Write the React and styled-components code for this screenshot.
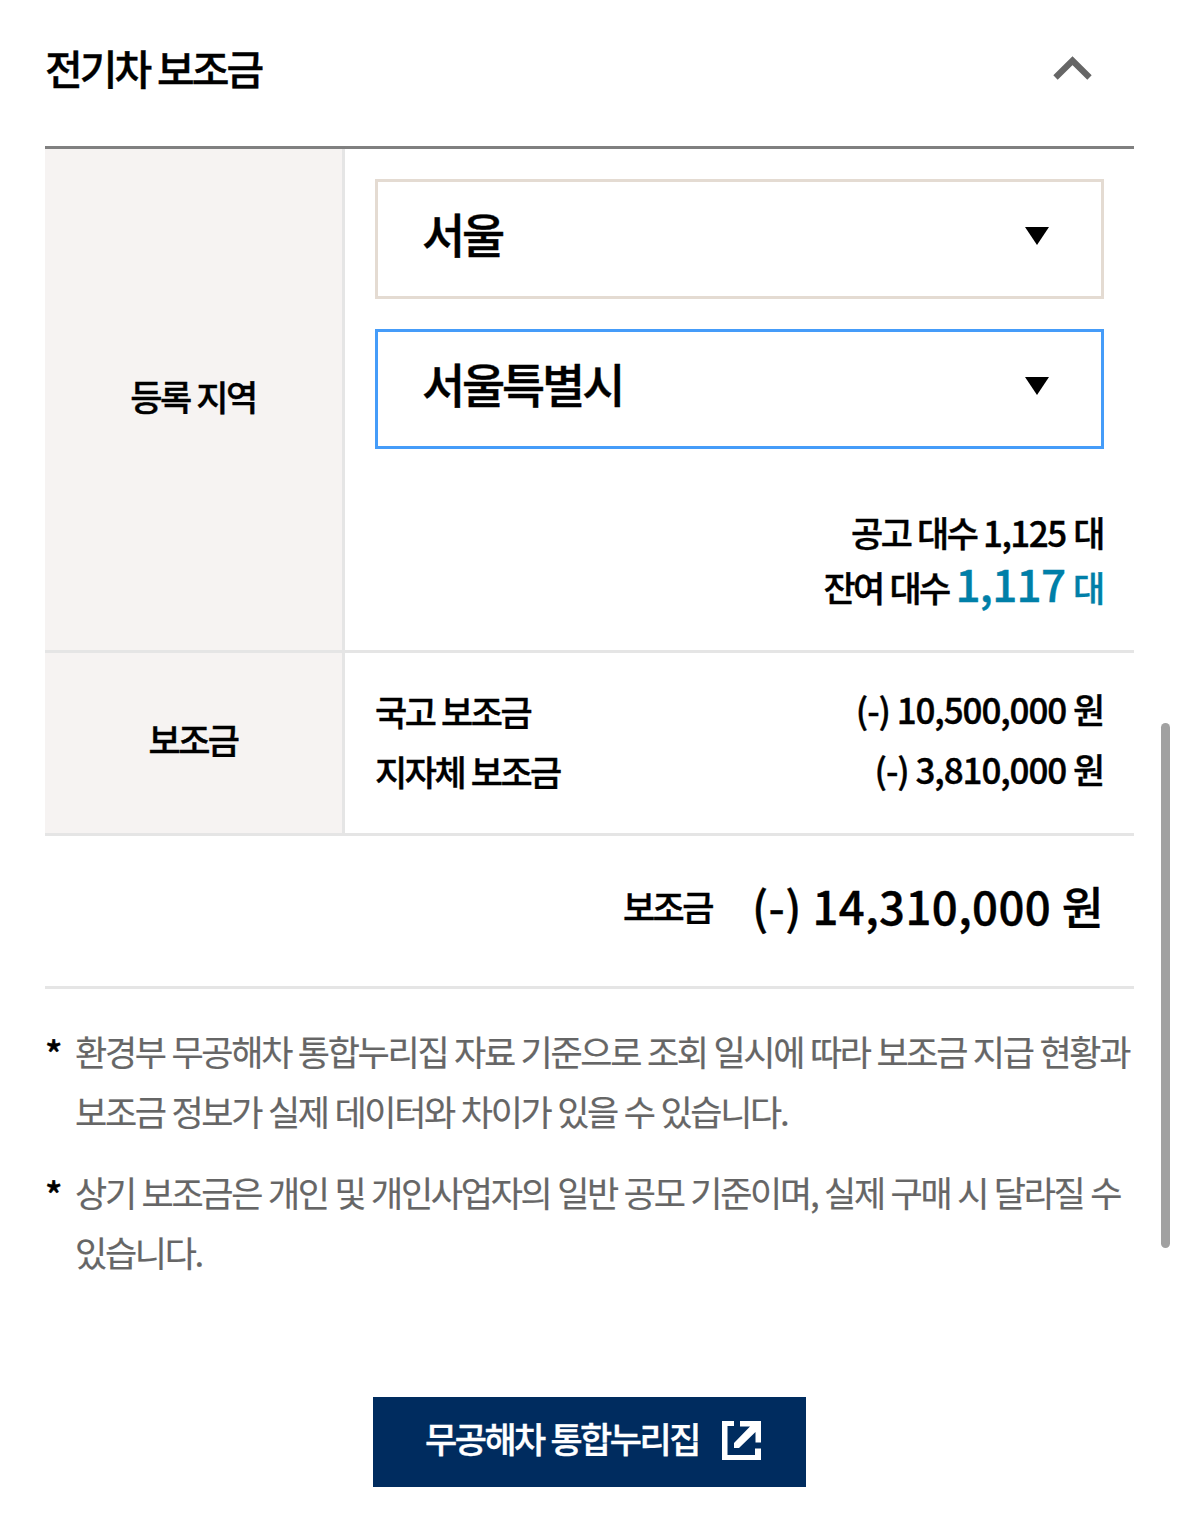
import React from "react";
import styled, { createGlobalStyle } from "styled-components";

const GlobalStyle = createGlobalStyle`
  * { box-sizing: border-box; }
  body {
    margin: 0;
    background: #fff;
    color: #000;
    font-family: "Noto Sans CJK KR", "Noto Sans", sans-serif;
    font-weight: 500;
  }
`;

const Page = styled.main`
  position: relative;
  width: 1179px;
  height: 1534px;
  padding: 0 45px;
  overflow: hidden;
`;

const Text = styled.span`
  display: block;
  white-space: pre;
  font-size: ${(p) => p.$size || 35}px;
  letter-spacing: ${(p) => p.$track ?? -2.5}px;
  word-spacing: ${(p) => p.$word ?? 1.2}px;
  line-height: ${(p) => p.$line || 60}px;
  color: ${(p) => p.$color || "inherit"};
  font-weight: ${(p) => p.$weight || 500};
  -webkit-text-stroke: ${(p) => p.$stroke ?? 0.4}px currentColor;
`;

const Title = styled(Text).attrs({ as: "h1" })`
  margin: 0;
`;

const Header = styled.header`
  display: flex;
  justify-content: space-between;
  height: 146px;
  padding: 37px 42px 0 0;
`;

const Chevron = styled.svg`
  width: 39px;
  height: 25px;
  margin-top: 19px;
`;

const Table = styled.section`
  border-top: 3px solid #808080;
`;

const Row = styled.div`
  display: grid;
  grid-template-columns: 300px 1fr;
  height: ${(p) => p.$height}px;
  border-bottom: 3px solid #e5e5e5;
`;

const Label = styled.div`
  display: flex;
  align-items: center;
  justify-content: center;
  padding: 0 1px 8px 0;
  background: #f6f3f2;
  border-right: 3px solid #e5e5e5;
`;

const Cell = styled.div`
  display: flex;
  flex-direction: column;
  padding: ${(p) => p.$top}px 30px 0;
`;

const Select = styled.div`
  display: flex;
  justify-content: space-between;
  height: 120px;
  margin-bottom: 30px;
  padding: 19px 52px 0 44px;
  border: 3px solid ${(p) => (p.$active ? "#459cf9" : "#e4dbd2")};
`;

const Arrow = styled.svg`
  width: 24px;
  height: 18px;
  margin-top: 26px;
`;

const Counts = styled.div`
  display: flex;
  flex-direction: column;
  padding-top: 28px;
`;

const Count = styled.div`
  display: flex;
  justify-content: flex-end;
  align-items: baseline;
  height: ${(p) => p.$height || 54}px;
`;

const Item = styled.div`
  display: flex;
  justify-content: space-between;
  height: 60px;
`;

const Amount = styled(Text)`
  margin-top: -2px;
`;

const Total = styled.div`
  display: flex;
  justify-content: flex-end;
  gap: 40px;
  height: 153px;
  padding: 37px 30px 0 0;
  border-bottom: 3px solid #e5e5e5;
`;

const Notes = styled.ul`
  list-style: none;
  margin: 32px 0 0;
  padding: 0;
`;

const Note = styled.li`
  display: flex;
  margin-bottom: 21px;
`;

const Star = styled(Text)`
  width: 30px;
  padding-top: 1px;
`;

const LinkButton = styled.a`
  display: flex;
  width: 433px;
  height: 90px;
  margin: 115px auto 0;
  padding: 11px 45px 0 52px;
  justify-content: space-between;
  background: #002c5f;
`;

const LinkIcon = styled.svg`
  width: 39px;
  height: 39px;
  margin-top: 13px;
`;

const ScrollThumb = styled.div`
  position: absolute;
  top: 723px;
  right: 9px;
  width: 9px;
  height: 525px;
  border-radius: 4.5px;
  background: #a1a1a1;
`;

const RegionSelect = ({ value, active }) => (
  <Select $active={active}>
    <Text $size={47} $track={-3.2} $line={64}>{value}</Text>
    <Arrow viewBox="0 0 24 18"><path d="M0 0H24L12 18Z" /></Arrow>
  </Select>
);

const NOTES = [
  [
    "환경부 무공해차 통합누리집 자료 기준으로 조회 일시에 따라 보조금 지급 현황과",
    "보조금 정보가 실제 데이터와 차이가 있을 수 있습니다.",
  ],
  [
    "상기 보조금은 개인 및 개인사업자의 일반 공모 기준이며, 실제 구매 시 달라질 수",
    "있습니다.",
  ],
];

export default function App() {
  return (
    <Page>
      <GlobalStyle />
      <Header>
        <Title $size={41} $track={-3} $word={1.6}>전기차 보조금</Title>
        <Chevron viewBox="0 0 39 25">
          <path d="M2.5 21.5L19.5 4.7L36.5 21.5" fill="none" stroke="#666" strokeWidth="6.2" />
        </Chevron>
      </Header>
      <Table>
        <Row $height={504}>
          <Label><Text>등록 지역</Text></Label>
          <Cell $top={30}>
            <RegionSelect value="서울" />
            <RegionSelect value="서울특별시" active />
            <Counts>
              <Count $height={49}>
                <Text $line={50}>공고 대수 </Text>
                <Text $line={50} $track={-1.5}>1,125 대</Text>
              </Count>
              <Count>
                <Text $line={54}>잔여 대수 </Text>
                <Text $line={54} $size={44} $track={-0.7} $color="#007fa8">1,117</Text>
                <Text $line={54} $track={-1.3} $color="#007fa8"> 대</Text>
              </Count>
            </Counts>
          </Cell>
        </Row>
        <Row $height={183}>
          <Label><Text>보조금</Text></Label>
          <Cell $top={28}>
            <Item>
              <Text>국고 보조금</Text>
              <Amount $track={-1.1} $word={0}>(-) 10,500,000 원</Amount>
            </Item>
            <Item>
              <Text>지자체 보조금</Text>
              <Amount $track={-1.1} $word={0}>(-) 3,810,000 원</Amount>
            </Item>
          </Cell>
        </Row>
        <Total>
          <Text $line={66}>보조금</Text>
          <Text $size={45.5} $track={0.4} $word={0} $line={64}>(-) 14,310,000 원</Text>
        </Total>
      </Table>
      <Notes>
        {NOTES.map((lines) => (
          <Note key={lines[0]}>
            <Star $size={36}>*</Star>
            <div>
              {lines.map((line) => (
                <Text key={line} $track={-2.3} $color="#666" $weight={400} $stroke={0.2}>{line}</Text>
              ))}
            </div>
          </Note>
        ))}
      </Notes>
      <LinkButton>
        <Text $color="#fff">무공해차 통합누리집</Text>
        <LinkIcon viewBox="0 0 39 39">
          <path d="M0 0H12V5H5.5V34H33V27.5H39V39H0Z" fill="#fff" />
          <path d="M18 0H39V21.5H33.5V11L17 27H12V22L28 5.5H18Z" fill="#fff" />
        </LinkIcon>
      </LinkButton>
      <ScrollThumb />
    </Page>
  );
}
